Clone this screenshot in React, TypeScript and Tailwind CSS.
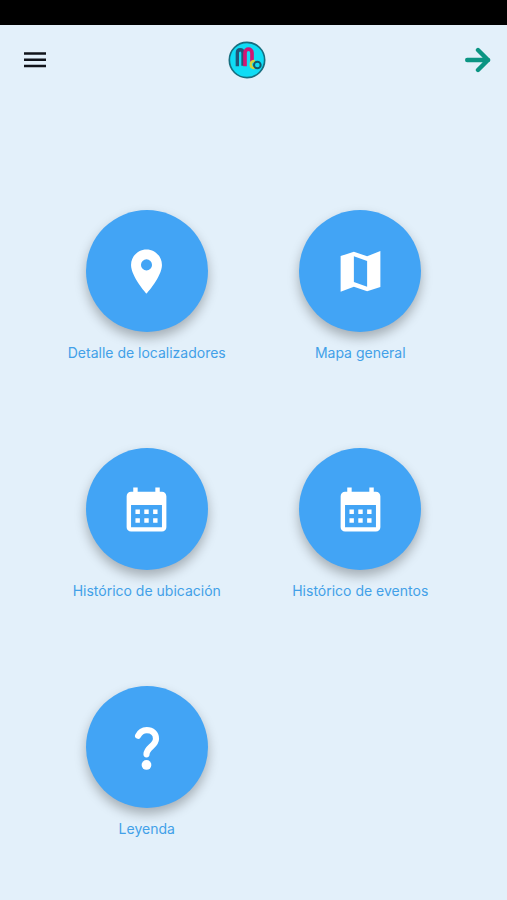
import React from 'react';
import { MdCalendarMonth } from 'react-icons/md';

function PinIcon() {
  return (
    <svg viewBox="0 0 24 24" fill="currentColor" className="size-[53px]">
      <path d="M12 2C8.13 2 5 5.13 5 9c0 5.25 7 13 7 13s7-7.75 7-13c0-3.87-3.13-7-7-7zm0 9.5a2.5 2.5 0 1 1 0-5 2.5 2.5 0 0 1 0 5z" />
    </svg>
  );
}

function MapIcon() {
  return (
    <svg viewBox="0 0 24 24" fill="currentColor" className="size-[53px]">
      <path d="M15 5.1 9 3 3 5.02v16.2l6-2.33 6 2.1 6-2.02V2.77L15 5.1zm0 13.79-6-2.11V5.11l6 2.11v11.67z" />
    </svg>
  );
}

function QuestionIcon() {
  return (
    <svg viewBox="0 0 24 24" fill="none" className="size-[53px]">
      <path
        d="M8.2 6.7C9 5 10.4 4.1 12.1 4.1c2.5 0 4.2 1.7 4.2 3.9 0 3.3-4.3 3.9-4.3 7.1"
        stroke="currentColor"
        strokeWidth="2.8"
        strokeLinecap="round"
      />
      <circle cx="12" cy="19.9" r="2.2" fill="currentColor" />
    </svg>
  );
}

function Logo() {
  return (
    <svg viewBox="4 4 114 114" className="size-[38px]" role="img" aria-label="Inicio">
      <circle cx="61" cy="61" r="53" fill="#0fdcf5" stroke="#176f80" strokeWidth="5" />
      <path d="M32 80V40c0-13 17-13 17 0v38" fill="none" stroke="#21567a" strokeWidth="10" />
      <path d="M55 80V39c0-14 21-14 21 0v28" fill="none" stroke="#d01674" strokeWidth="11" />
      <path d="M85 64c-17 0-17 20 0 21" fill="none" stroke="#d3d43c" strokeWidth="8" />
      <circle cx="92" cy="76" r="10" fill="#0fdcf5" stroke="#14566b" strokeWidth="6" />
    </svg>
  );
}

const options = [
  { label: 'Detalle de localizadores', icon: <PinIcon /> },
  { label: 'Mapa general', icon: <MapIcon /> },
  { label: 'Histórico de ubicación', icon: <MdCalendarMonth className="size-[53px]" /> },
  { label: 'Histórico de eventos', icon: <MdCalendarMonth className="size-[53px]" /> },
  { label: 'Leyenda', icon: <QuestionIcon /> },
];

export default function App() {
  return (
    <div className="min-h-screen bg-[#e3f0fa] font-['Inter',sans-serif]">
      <div className="h-[25px] bg-black" />
      <header className="flex h-[69px] items-center pl-6 pr-4">
        <button type="button" aria-label="Abrir menú" className="flex h-11 items-center">
          <svg viewBox="0 0 22 16" className="h-4 w-[22px]" fill="#10131a">
            <path d="M0 .3h22v2.5H0zM0 6.5h22V9H0zM0 12.7h22v2.5H0z" />
          </svg>
        </button>
        <div className="flex flex-1 justify-center">
          <Logo />
        </div>
        <button type="button" aria-label="Continuar" className="flex h-11 w-11 items-center justify-end">
          <svg
            viewBox="0 0 26 26"
            className="size-[26px]"
            fill="none"
            stroke="#0b9583"
            strokeWidth="4.4"
            strokeLinecap="round"
            strokeLinejoin="round"
          >
            <path d="M2.2 13h21M13 3l10 10-10 10" />
          </svg>
        </button>
      </header>
      <main className="grid grid-cols-2 gap-y-[84px] px-10 pb-14 pt-[116px]">
        {options.map(({ label, icon }) => (
          <button key={label} type="button" className="flex flex-col items-center gap-[10px]">
            <span className="flex size-[122px] items-center justify-center rounded-full bg-[#42a4f5] text-white shadow-[0_6px_12px_rgba(0,0,0,0.28)]">
              {icon}
            </span>
            <span className="text-sm leading-[22px] text-[#42a0e8]">{label}</span>
          </button>
        ))}
      </main>
    </div>
  );
}
